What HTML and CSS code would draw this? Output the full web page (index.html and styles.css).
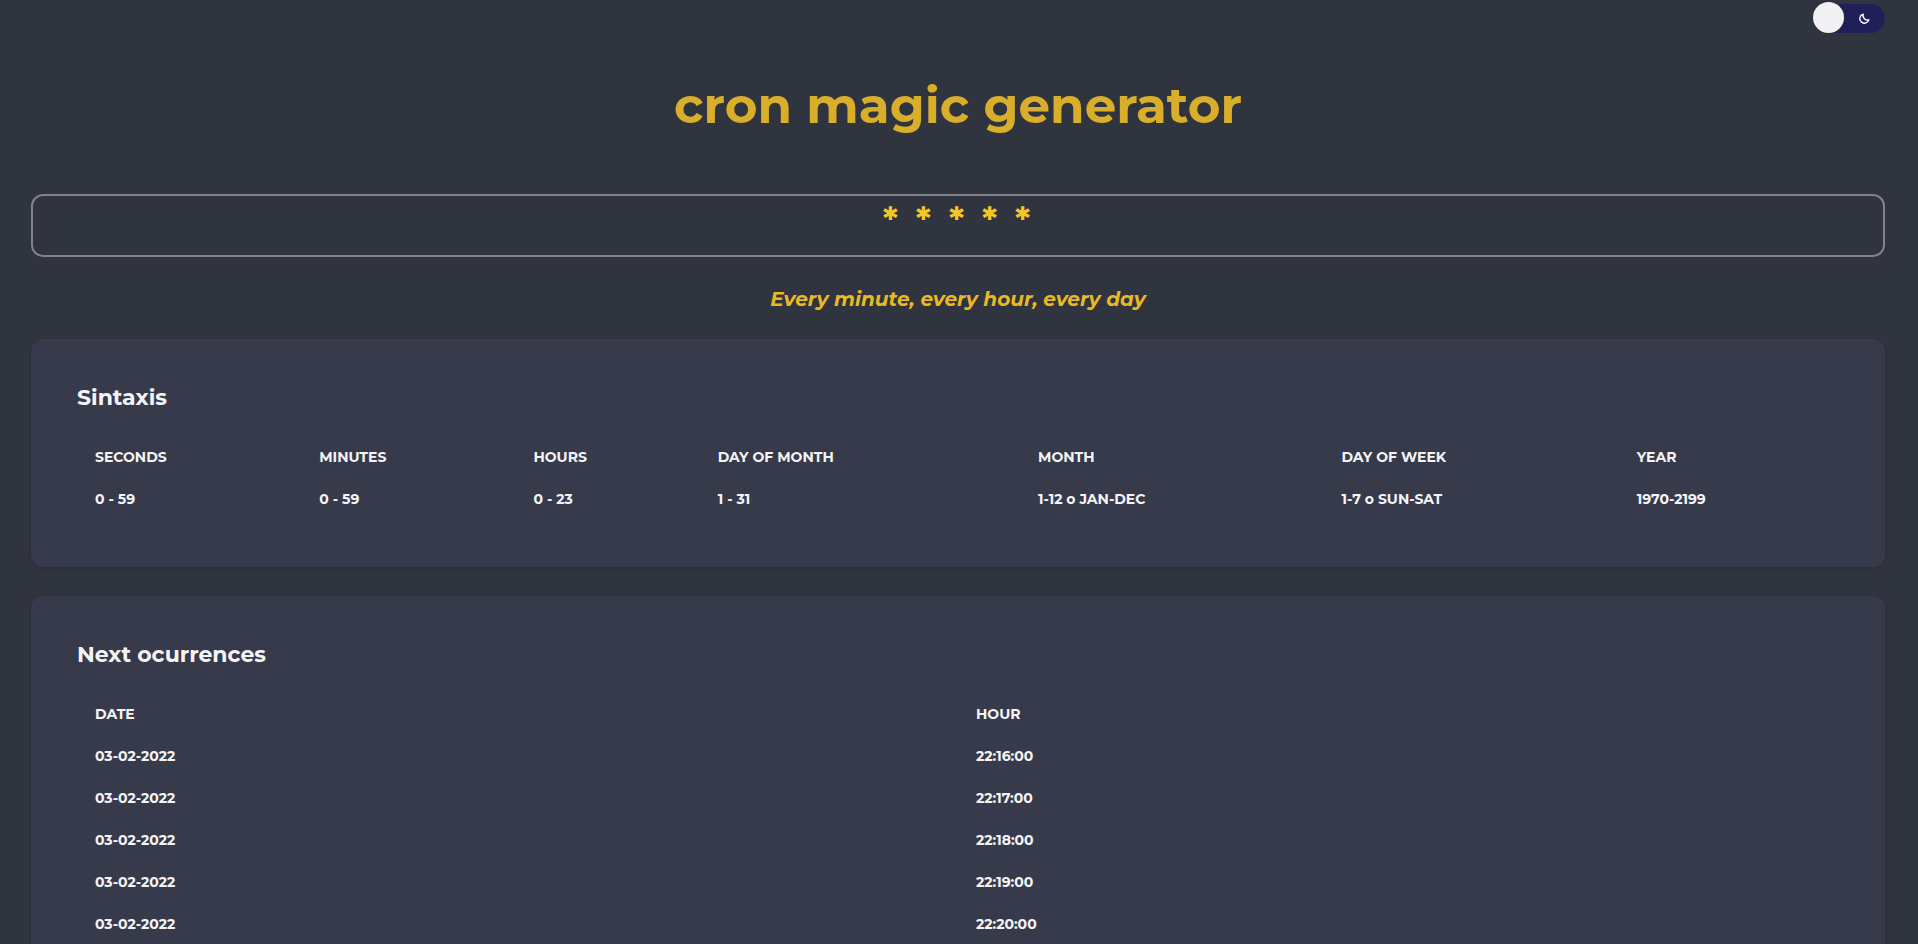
FILE: index.html
```html
<!DOCTYPE html>
<html lang="en">
<head>
<meta charset="utf-8">
<title>cron magic generator</title>
<link rel="stylesheet" href="styles.css">
</head>
<body>
<header class="topbar">
  <div class="toggle" role="switch" aria-checked="true">
    <span class="knob"></span>
    <svg class="moon" viewBox="0 0 24 24" width="13" height="13"><path d="M20 14.5A8.5 8.5 0 0 1 9.5 4a8.5 8.5 0 1 0 10.5 10.5z" fill="none" stroke="#ffffff" stroke-width="2.6" stroke-linejoin="round"/></svg>
  </div>
</header>
<main class="page">
  <h1 class="title">cron magic generator</h1>
  <div class="expr-box"><span class="expr">* * * * *</span></div>
  <p class="desc">Every minute, every hour, every day</p>

  <section class="card">
    <h2 class="card-title">Sintaxis</h2>
    <table class="grid syntax">
      <colgroup>
        <col class="c1"><col class="c2"><col class="c3"><col class="c4"><col class="c5"><col class="c6"><col class="c7">
      </colgroup>
      <thead>
        <tr><th>SECONDS</th><th>MINUTES</th><th>HOURS</th><th>DAY OF MONTH</th><th>MONTH</th><th>DAY OF WEEK</th><th>YEAR</th></tr>
      </thead>
      <tbody>
        <tr><td>0 - 59</td><td>0 - 59</td><td>0 - 23</td><td>1 - 31</td><td>1-12 o JAN-DEC</td><td>1-7 o SUN-SAT</td><td>1970-2199</td></tr>
      </tbody>
    </table>
  </section>

  <section class="card">
    <h2 class="card-title">Next ocurrences</h2>
    <table class="grid next">
      <thead>
        <tr><th>DATE</th><th>HOUR</th></tr>
      </thead>
      <tbody>
        <tr><td>03-02-2022</td><td>22:16:00</td></tr>
        <tr><td>03-02-2022</td><td>22:17:00</td></tr>
        <tr><td>03-02-2022</td><td>22:18:00</td></tr>
        <tr><td>03-02-2022</td><td>22:19:00</td></tr>
        <tr><td>03-02-2022</td><td>22:20:00</td></tr>
      </tbody>
    </table>
  </section>
</main>
</body>
</html>
```
FILE: styles.css
```css
html, body {
  margin: 0;
  padding: 0;
}
body {
  background: #30343f;
  color: #f4f4f6;
  font-family: "Montserrat", "Inter", "DejaVu Sans", sans-serif;
  font-weight: 700;
}
.topbar {
  display: flex;
  justify-content: flex-end;
  padding: 3px 33px 0 0;
  height: 33px;
}
.toggle {
  position: relative;
  display: flex;
  align-items: center;
  justify-content: flex-end;
  width: 72px;
  height: 29px;
  margin-top: 1px;
  border-radius: 15px;
  background: #1f205a;
  padding-right: 14px;
  box-sizing: border-box;
}
.knob {
  position: absolute;
  left: 0;
  top: -2px;
  width: 31px;
  height: 31px;
  border-radius: 50%;
  background: #f1f1f3;
  box-shadow: 0 0 0 1px #2a2c36;
}
.moon {
  display: block;
}
.page {
  padding: 0 33px 0 31px;
}
.title {
  margin: 40px 0 0;
  text-align: center;
  color: #d8ae2b;
  font-size: 50px;
  line-height: 60px;
  font-weight: 700;
  letter-spacing: 0;
}
.expr-box {
  margin-top: 58px;
  height: 63px;
  box-sizing: border-box;
  border: 2px solid #80838a;
  border-radius: 12px;
  text-align: center;
  padding-top: 5px;
}
.expr {
  color: #f3c628;
  font-size: 35px;
  line-height: 38px;
  letter-spacing: 3px;
  word-spacing: 2px;
}
.desc {
  margin: 30px 0 0;
  text-align: center;
  color: #e9b924;
  font-style: italic;
  font-size: 20px;
  line-height: 24px;
}
.card {
  margin-top: 28px;
  background: #373a4a;
  border-radius: 12px;
  padding: 45px 46px 47px 46px;
  box-shadow: 0 1px 3px rgba(0,0,0,0.15);
}
.card + .card {
  margin-top: 29px;
}
.card-title {
  margin: 0;
  font-size: 22px;
  line-height: 28px;
  font-weight: 700;
}
.grid {
  width: 100%;
  border-collapse: collapse;
  table-layout: fixed;
  margin-top: 24px;
  font-size: 14px;
}
.grid th, .grid td {
  text-align: left;
  padding: 12px 17px 12px 18px;
  line-height: 18px;
  font-weight: 700;
}
.syntax .c1 { width: 224px; }
.syntax .c2 { width: 214px; }
.syntax .c3 { width: 184px; }
.syntax .c4 { width: 320px; }
.syntax .c5 { width: 303px; }
.syntax .c6 { width: 295px; }
.syntax .c7 { width: 220px; }
```
